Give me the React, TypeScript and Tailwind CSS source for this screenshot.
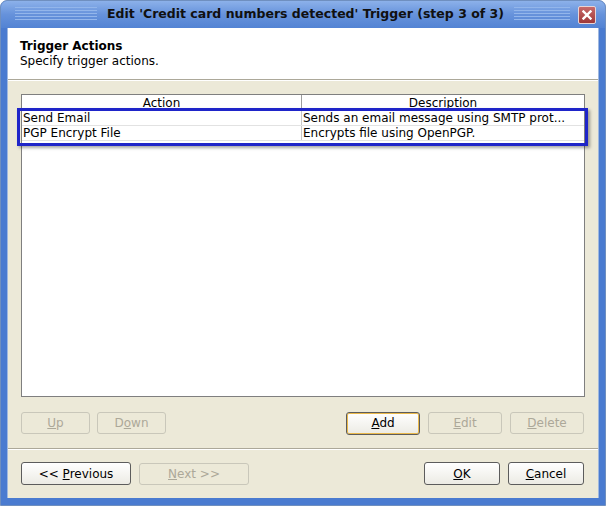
import React from "react";

const font = { fontFamily: '"DejaVu Sans", Verdana, sans-serif' };

function Btn({ children, w, disabled, def }: { children: React.ReactNode; w: string; disabled?: boolean; def?: boolean }) {
  if (disabled) {
    return (
      <div className={`${w} h-[22px] rounded-[3px] border border-[#C9C7BA] flex items-center justify-center text-[12px] text-[#ACA899]`}>
        <span className="whitespace-pre">{children}</span>
      </div>
    );
  }
  return (
    <div className={`${w} h-[23px] rounded-[3px] border border-[#5C5C5C] bg-gradient-to-b from-white to-[#ECEBE4] flex items-center justify-center text-[12px] text-black ${def ? "shadow-[inset_0_0_0_1px_#E9B84A]" : ""}`}>
      <span className="whitespace-pre">{children}</span>
    </div>
  );
}

const stripes = "h-[15px] bg-[repeating-linear-gradient(to_bottom,#93B6EB_0px,#93B6EB_1px,transparent_1px,transparent_3px)]";

export default function App() {
  return (
    <div className="w-[606px] h-[506px] bg-white overflow-hidden" style={font}>
      <div className="w-[606px] h-[506px] flex flex-col rounded-t-[7px] overflow-hidden bg-[#4A7BD0] border border-[#6F8FBF]">
        {/* Title bar */}
        <div className="h-[27px] flex items-center pl-[14px] pr-[9px] gap-[10px] bg-gradient-to-b from-[#8CB1EA] via-[#6692DB] to-[#5283D4] shrink-0">
          <div className={`flex-1 ${stripes}`} />
          <div className="text-[12.5px] font-bold text-[#101010] whitespace-nowrap">
            Edit 'Credit card numbers detected' Trigger (step 3 of 3)
          </div>
          <div className="flex-1 flex items-center gap-[8px]">
            <div className={`flex-1 ${stripes}`} />
            <div className="w-[18px] h-[18px] rounded-[2px] border border-[#E8D4D4] bg-gradient-to-b from-[#C86A6A] to-[#9E3838] flex items-center justify-center shrink-0">
              <svg width="10" height="10" viewBox="0 0 10 10">
                <path d="M1.5 1.5 L8.5 8.5 M8.5 1.5 L1.5 8.5" stroke="white" strokeWidth="2.4" strokeLinecap="square" />
              </svg>
            </div>
          </div>
        </div>
        {/* Body with frame */}
        <div className="flex-1 flex flex-col mx-[6px] mb-[7px] bg-[#ECE9D8] border-x border-[#9FB8E0]">
          {/* Header */}
          <div className="h-[52px] bg-white px-[12px] pt-[11px] border-b border-[#ACA899] shrink-0">
            <div className="text-[12px] font-bold leading-[15px] text-black">Trigger Actions</div>
            <div className="text-[12px] leading-[15px] text-black">Specify trigger actions.</div>
          </div>
          <div className="h-px bg-white shrink-0" />
          {/* Content */}
          <div className="pl-[13px] pr-[13px] pt-[13px] flex flex-col">
            <div className="relative h-[303px] border border-[#7F7F7F] bg-white">
              <div className="flex h-[16px] border-b border-[#9D9D9D] text-[12px] leading-[16px] text-black">
                <div className="w-[280px] text-center border-r border-[#9D9D9D]">Action</div>
                <div className="flex-1 text-center">Description</div>
              </div>
              {[
                ["Send Email", "Sends an email message using SMTP prot..."],
                ["PGP Encrypt File", "Encrypts file using OpenPGP."],
              ].map(([a, d]) => (
                <div key={a} className="flex h-[15px] border-b border-[#E2E2E2] text-[12px] leading-[14px] text-black">
                  <div className="w-[280px] pl-[1px] border-r border-[#C8C8C8] overflow-hidden whitespace-nowrap">{a}</div>
                  <div className="flex-1 pl-[1px] overflow-hidden whitespace-nowrap">{d}</div>
                </div>
              ))}
              <div className="absolute left-[-5px] top-[13px] w-[571px] h-[38px] border-[3px] border-[#1F25C9] shadow-[2px_2px_3px_rgba(0,0,0,0.35)] pointer-events-none" />
            </div>
            <div className="flex items-center mt-[15px] h-[22px]">
              <div className="flex gap-[7px]">
                <Btn w="w-[69px]" disabled><u>U</u>p</Btn>
                <Btn w="w-[69px]" disabled>D<u>o</u>wn</Btn>
              </div>
              <div className="flex-1" />
              <div className="flex gap-[8px] items-center mr-px">
                <Btn w="w-[74px]" def><u>A</u>dd</Btn>
                <Btn w="w-[74px]" disabled><u>E</u>dit</Btn>
                <Btn w="w-[74px]" disabled><u>D</u>elete</Btn>
              </div>
            </div>
          </div>
          <div className="mt-[14px] h-px bg-[#ACA899]" />
          <div className="h-px bg-white" />
          <div className="pl-[13px] pr-[14px] pt-[12px] flex items-center">
            <div className="flex gap-[8px] items-center">
              <Btn w="w-[110px]">&lt;&lt; <u>P</u>revious</Btn>
              <Btn w="w-[110px]" disabled><u>N</u>ext &gt;&gt;</Btn>
            </div>
            <div className="flex-1" />
            <div className="flex gap-[8px] items-center">
              <Btn w="w-[76px]"><u>O</u>K</Btn>
              <Btn w="w-[76px]"><u>C</u>ancel</Btn>
            </div>
          </div>
        </div>
      </div>
    </div>
  );
}
